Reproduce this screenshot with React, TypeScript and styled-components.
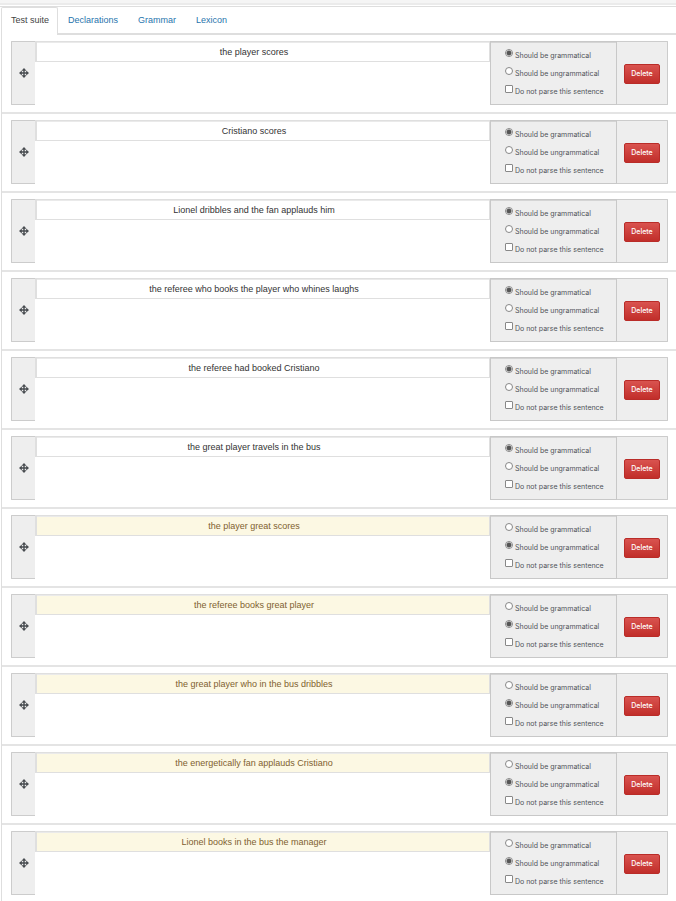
import React, { useState } from "react";
import styled, { createGlobalStyle } from "styled-components";

const GlobalStyle = createGlobalStyle`
  *, *::before, *::after { box-sizing: border-box; }
  body {
    margin: 0;
    background: #fff;
    color: #333;
    font-family: "Liberation Sans", Arial, sans-serif;
    font-size: 9px;
    line-height: 12px;
  }
`;

const Page = styled.div`
  height: 100vh;
  overflow: hidden;
  display: flex;
  flex-direction: column;
`;

const TopEdge = styled.div`
  flex: none;
  height: 7px;
  background: #f5f5f5;
  border-bottom: 1px solid #dedede;
  box-shadow: inset 0 -1px 0 #fff, inset 0 -3px 0 #ebebeb;
`;

const Tabs = styled.nav`
  flex: none;
  display: flex;
  height: 28px;
  margin-left: 1px;
  border-bottom: 2px solid #dedede;
`;

const Tab = styled.a<{ $active?: boolean }>`
  height: ${(p) => (p.$active ? 28 : 26)}px;
  padding: ${(p) => (p.$active ? "6px 8px 0 9px" : "6px 9px 0")};
  border: solid ${(p) => (p.$active ? "#dedede" : "transparent")};
  border-width: 1px 1px 0;
  border-radius: 2px 2px 0 0;
  background: ${(p) => (p.$active ? "#fff" : "transparent")};
  color: ${(p) => (p.$active ? "#444" : "#1f74ad")};
  text-decoration: none;
`;

const Suite = styled.ul`
  flex: none;
  margin: 0 0 0 1px;
  padding: 0;
  list-style: none;
  border-left: 1px solid #dedede;
`;

const Row = styled.li`
  display: flex;
  padding: 6px 8px 7px 9px;
  border-bottom: 2px solid #e4e4e4;
`;

const Handle = styled.div`
  flex: none;
  width: 24px;
  height: 64px;
  display: flex;
  align-items: center;
  justify-content: center;
  background: #eee;
  border: 1px solid #ccc;
  border-right: 0;
  border-radius: 1px 0 0 1px;
`;

const Sentence = styled.input<{ $bad: boolean }>`
  flex: 1;
  min-width: 0;
  height: 21px;
  margin: 0;
  padding: 0 18px 0 0;
  border: 1px solid #dfdfdf;
  border-width: 1px 1px 1px 2px;
  border-radius: 0;
  box-shadow: inset 0 1px 0 #eaeaea;
  background: ${(p) => (p.$bad ? "#fcf8e3" : "#fff")};
  color: ${(p) => (p.$bad ? "#80612f" : "#333")};
  font: inherit;
  text-align: center;
  outline: none;
`;

const Options = styled.fieldset`
  flex: none;
  width: 127px;
  height: 64px;
  margin: 0;
  padding: 7px 0 0 14px;
  display: flex;
  flex-direction: column;
  gap: 6px;
  min-width: 0;
  background: #eee;
  border: 1px solid #c8c8c8;
  box-shadow: inset 0 1px 0 #d4d4d4;
`;

const Option = styled.label`
  display: flex;
  height: 12px;
  gap: 2px;
  color: #505359;
  font-family: Inter, "Liberation Sans", Arial, sans-serif;
  font-size: 7px;
  line-height: 14px;
  white-space: nowrap;
`;

const Mark = styled.input`
  flex: none;
  width: 8px;
  height: 8px;
  margin: 0;
  appearance: none;
  background: #fff;
  border: 1px solid #888;
  border-radius: ${(p) => (p.type === "radio" ? "50%" : "1px")};
  &[type="radio"]:checked {
    background: radial-gradient(circle, #555 0 2px, #fff 3px);
  }
  &[type="checkbox"]:checked {
    background: #555;
  }
`;

const Actions = styled.div`
  flex: none;
  width: 51px;
  height: 64px;
  padding-top: 2px;
  display: flex;
  align-items: center;
  justify-content: center;
  background: #eee;
  border: 1px solid #ccc;
  border-left: 0;
  border-radius: 0 1px 1px 0;
`;

const DeleteButton = styled.button`
  width: 36px;
  height: 20px;
  margin: 0;
  padding: 0;
  border: 1px solid #b92c28;
  border-radius: 2px;
  background: linear-gradient(#d9534f, #c12e2a);
  color: #fff;
  font: 500 7px/12px Inter, "Liberation Sans", Arial, sans-serif;
  cursor: pointer;
`;

const MoveIcon = () => (
  <svg width="10" height="10" viewBox="0 0 10 10" aria-hidden="true">
    <path d="M5 1V9M1 5H9" stroke="#484c50" strokeWidth="1.4" />
    <path
      d="M5 0L7.5 2.8H2.5ZM5 10L7.5 7.2H2.5ZM0 5L2.8 2.5V7.5ZM10 5L7.2 2.5V7.5Z"
      fill="#484c50"
    />
  </svg>
);

const sentences = [
  { text: "the player scores", grammatical: true },
  { text: "Cristiano scores", grammatical: true },
  { text: "Lionel dribbles and the fan applauds him", grammatical: true },
  { text: "the referee who books the player who whines laughs", grammatical: true },
  { text: "the referee had booked Cristiano", grammatical: true },
  { text: "the great player travels in the bus", grammatical: true },
  { text: "the player great scores", grammatical: false },
  { text: "the referee books great player", grammatical: false },
  { text: "the great player who in the bus dribbles", grammatical: false },
  { text: "the energetically fan applauds Cristiano", grammatical: false },
  { text: "Lionel books in the bus the manager", grammatical: false },
];

export default function App() {
  const [items, setItems] = useState(
    sentences.map((s, id) => ({ ...s, id, skip: false })),
  );
  const update = (id: number, change: Partial<(typeof items)[number]>) =>
    setItems((all) => all.map((i) => (i.id === id ? { ...i, ...change } : i)));

  return (
    <Page>
      <GlobalStyle />
      <TopEdge />
      <Tabs>
        <Tab href="#suite" $active>Test suite</Tab>
        <Tab href="#declarations">Declarations</Tab>
        <Tab href="#grammar">Grammar</Tab>
        <Tab href="#lexicon">Lexicon</Tab>
      </Tabs>
      <Suite>
        {items.map((item) => (
          <Row key={item.id}>
            <Handle><MoveIcon /></Handle>
            <Sentence
              aria-label="Sentence"
              $bad={!item.grammatical}
              value={item.text}
              onChange={(e) => update(item.id, { text: e.target.value })}
            />
            <Options>
              <Option>
                <Mark
                  type="radio"
                  name={`status-${item.id}`}
                  checked={item.grammatical}
                  onChange={() => update(item.id, { grammatical: true })}
                />
                Should be grammatical
              </Option>
              <Option>
                <Mark
                  type="radio"
                  name={`status-${item.id}`}
                  checked={!item.grammatical}
                  onChange={() => update(item.id, { grammatical: false })}
                />
                Should be ungrammatical
              </Option>
              <Option>
                <Mark
                  type="checkbox"
                  checked={item.skip}
                  onChange={(e) => update(item.id, { skip: e.target.checked })}
                />
                Do not parse this sentence
              </Option>
            </Options>
            <Actions>
              <DeleteButton
                type="button"
                onClick={() => setItems((all) => all.filter((i) => i.id !== item.id))}
              >
                Delete
              </DeleteButton>
            </Actions>
          </Row>
        ))}
      </Suite>
    </Page>
  );
}
